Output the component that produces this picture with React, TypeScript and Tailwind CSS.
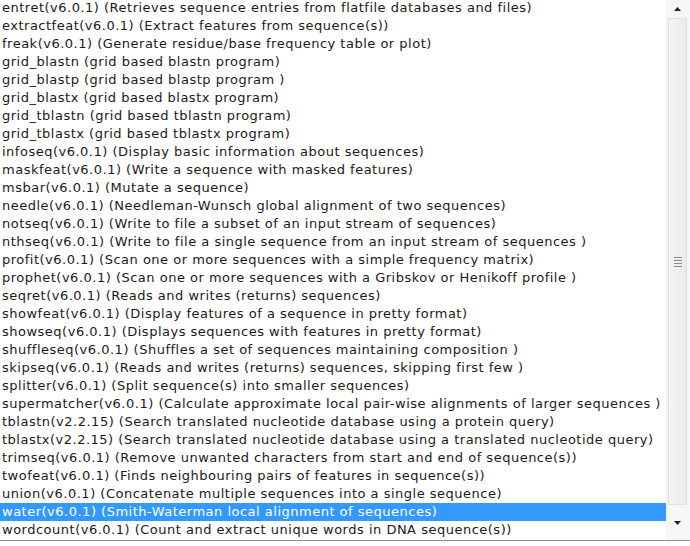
import React from 'react'

const rows = [
  'entret(v6.0.1) (Retrieves sequence entries from flatfile databases and files)',
  'extractfeat(v6.0.1) (Extract features from sequence(s))',
  'freak(v6.0.1) (Generate residue/base frequency table or plot)',
  'grid_blastn (grid based blastn program)',
  'grid_blastp (grid based blastp program )',
  'grid_blastx (grid based blastx program)',
  'grid_tblastn (grid based tblastn program)',
  'grid_tblastx (grid based tblastx program)',
  'infoseq(v6.0.1) (Display basic information about sequences)',
  'maskfeat(v6.0.1) (Write a sequence with masked features)',
  'msbar(v6.0.1) (Mutate a sequence)',
  'needle(v6.0.1) (Needleman-Wunsch global alignment of two sequences)',
  'notseq(v6.0.1) (Write to file a subset of an input stream of sequences)',
  'nthseq(v6.0.1) (Write to file a single sequence from an input stream of sequences )',
  'profit(v6.0.1) (Scan one or more sequences with a simple frequency matrix)',
  'prophet(v6.0.1) (Scan one or more sequences with a Gribskov or Henikoff profile )',
  'seqret(v6.0.1) (Reads and writes (returns) sequences)',
  'showfeat(v6.0.1) (Display features of a sequence in pretty format)',
  'showseq(v6.0.1) (Displays sequences with features in pretty format)',
  'shuffleseq(v6.0.1) (Shuffles a set of sequences maintaining composition )',
  'skipseq(v6.0.1) (Reads and writes (returns) sequences, skipping first few )',
  'splitter(v6.0.1) (Split sequence(s) into smaller sequences)',
  'supermatcher(v6.0.1) (Calculate approximate local pair-wise alignments of larger sequences )',
  'tblastn(v2.2.15) (Search translated nucleotide database using a protein query)',
  'tblastx(v2.2.15) (Search translated nucleotide database using a translated nucleotide query)',
  'trimseq(v6.0.1) (Remove unwanted characters from start and end of sequence(s))',
  'twofeat(v6.0.1) (Finds neighbouring pairs of features in sequence(s))',
  'union(v6.0.1) (Concatenate multiple sequences into a single sequence)',
  'water(v6.0.1) (Smith-Waterman local alignment of sequences)',
  'wordcount(v6.0.1) (Count and extract unique words in DNA sequence(s))',
]

const selected = 28

export default function App() {
  return (
    <div className="h-[546px] w-[690px] overflow-hidden bg-white font-['DejaVu_Sans',sans-serif]">
      <div className="flex h-[541px] border-b border-[#8f8f8f]">
        {/* list */}
        <div className="flex-1 overflow-hidden">
          <ul className="-mt-px">
            {rows.map((r, i) => (
              <li
                key={r}
                className={`h-[18px] whitespace-nowrap pl-[2px] text-[13px] leading-[18px] tracking-[0.5px] ${
                  i === selected ? 'bg-[#3399ff] text-white' : 'text-[#1a1a1a]'
                }`}
              >
                {r}
              </li>
            ))}
          </ul>
        </div>

        {/* scrollbar */}
        <div className="flex w-[24px] flex-col border-l border-[#f4f4f4] bg-[#f6f6f6] pr-[3px]">
          <div className="flex h-[18px] items-center justify-center">
            <svg width="7" height="4" viewBox="0 0 7 4">
              <path d="M0 4 L3.5 0 L7 4 Z" fill="#222" />
            </svg>
          </div>
          <div className="ml-[1px] flex h-[487px] items-center justify-center border border-[#e0e0e0] bg-gradient-to-r from-[#f4f4f4] to-[#ebebeb]">
            <div className="flex flex-col gap-[2px]">
              <div className="h-px w-[8px] bg-[#8a8a8a]" />
              <div className="h-px w-[8px] bg-[#8a8a8a]" />
              <div className="h-px w-[8px] bg-[#8a8a8a]" />
              <div className="h-px w-[8px] bg-[#8a8a8a]" />
            </div>
          </div>
          <div className="flex flex-1 items-center justify-center">
            <svg width="7" height="4" viewBox="0 0 7 4">
              <path d="M0 0 L3.5 4 L7 0 Z" fill="#222" />
            </svg>
          </div>
        </div>
      </div>
    </div>
  )
}
